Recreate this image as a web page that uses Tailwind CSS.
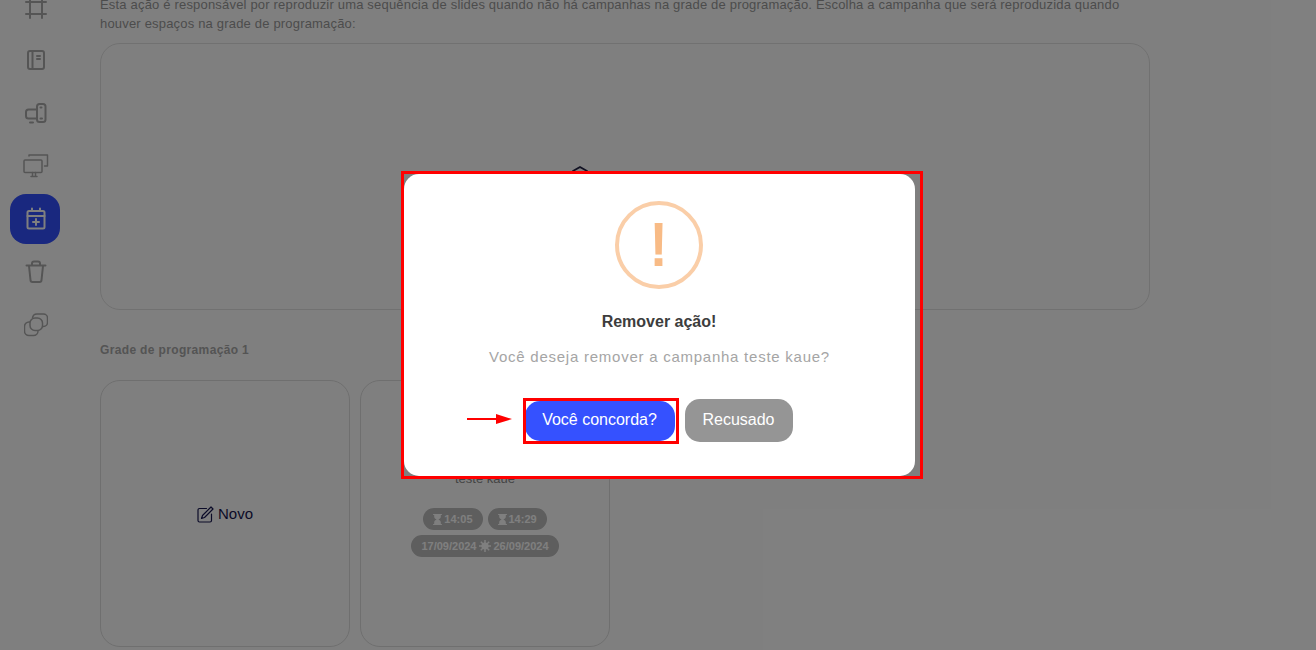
<!DOCTYPE html>
<html lang="pt-BR">
<head>
<meta charset="utf-8">
<title>Remover ação</title>
<script src="https://cdn.jsdelivr.net/npm/@tailwindcss/browser@4"></script>
</head>
<body class="h-[650px] w-[1316px] overflow-hidden bg-white font-['Liberation_Sans',Arial,sans-serif]">
<div class="relative h-[650px] w-[1316px] overflow-hidden">
  <div class="flex h-[650px] items-start">
    <aside class="flex w-[100px] shrink-0 flex-col items-start gap-[2.8px] pl-[10px] pt-0 mt-[-17px] text-[#aaaaaa]">
      <div class="flex h-[50px] w-[52px] items-center justify-center"><svg class="h-6 w-6" viewBox="0 0 24 24" fill="none" stroke="currentColor" stroke-width="2" stroke-linecap="round"><path d="M22 6H2M22 18H2M6 2v20M18 2v20"/></svg></div>
      <div class="flex h-[50px] w-[52px] items-center justify-center pb-[2px]"><svg class="h-6 w-6" viewBox="0 0 24 24" fill="none" stroke="currentColor" stroke-width="2" stroke-linecap="round" stroke-linejoin="round"><path d="M6 3h12a2 2 0 0 1 2 2v14a2 2 0 0 1-2 2H6a2 2 0 0 1-2-2V5a2 2 0 0 1 2-2zM8.500 3v18M13 8h3M13 11h3"/></svg></div>
      <div class="flex h-[50px] w-[52px] items-center justify-center"><svg class="h-6 w-6" viewBox="0 0 24 24" fill="none" stroke="currentColor" stroke-width="2" stroke-linecap="round" stroke-linejoin="round"><rect x="13" y="2" width="8.500" height="18" rx="2.500"/><path d="M16.500 16.500h1.500M16.500 5.500h1M13 7.500H4.500A2.500 2.500 0 0 0 2 10v4a2.500 2.500 0 0 0 2.500 2.500H13M6 20.500h3"/></svg></div>
      <div class="flex h-[50px] w-[52px] items-center justify-center"><svg class="h-[24px] w-[26px]" viewBox="0 0 26 24" fill="none" stroke="currentColor" stroke-width="1.500" stroke-linecap="round" stroke-linejoin="round"><rect x="1" y="6" width="18" height="12.500" rx="1"/><path d="M6 2V1h18.500v11h-3M8 22.500h6M9.500 18.500v4M12.500 18.500v4"/></svg></div>
      <div class="flex h-[50px] w-[50px] items-center justify-center rounded-[16px] bg-[#3250fe] text-white"><svg class="ml-[2px] h-6 w-6" viewBox="0 0 24 24" fill="none" stroke="currentColor" stroke-width="2" stroke-linecap="round" stroke-linejoin="round"><rect x="3.500" y="4" width="17" height="17.500" rx="1.500"/><path d="M3.500 9h17M8 1.500V4M16 1.500V4M12 12v6M9 15h6"/></svg></div>
      <div class="flex h-[50px] w-[52px] items-center justify-center"><svg class="h-6 w-6" viewBox="0 0 24 24" fill="none" stroke="currentColor" stroke-width="2" stroke-linecap="round" stroke-linejoin="round"><path d="M2.500 5.500h19M5 6l1.500 14a2 2 0 0 0 2 2h7a2 2 0 0 0 2-2L19 6M8 5V3.500A2 2 0 0 1 10 1.500h4a2 2 0 0 1 2 2V5"/></svg></div>
      <div class="flex h-[50px] w-[52px] items-center justify-center"><svg class="h-6 w-6" viewBox="0 0 24 24" fill="none" stroke="currentColor" stroke-width="1.500" stroke-linejoin="round"><rect x="6" y="5" width="12.500" height="12.500" rx="5"/><path d="M8.500 5A4.500 4.500 0 0 1 13 1h6.500a4 4 0 0 1 4 4v4.500a4 4 0 0 1-4 4H18.500M6 9H5a4.500 4.500 0 0 0-4.500 4.500V18A4.500 4.500 0 0 0 5 22.500h4.500A4.500 4.500 0 0 0 14 18v-.5"/></svg></div>
    </aside>
    <main class="w-[1050px] shrink-0 pt-0 mt-[-5px]">
      <p class="w-[1050px] text-[13px] leading-[19px] tracking-[0.185px] text-[#999999]">Esta ação é responsável por reproduzir uma sequência de slides quando não há campanhas na grade de programação. Escolha a campanha que será reproduzida quando houver espaços na grade de programação:</p>
      <div class="mt-[10px] flex h-[267px] justify-center rounded-[20px] border border-[#e2e2e2] pt-[120px]">
        <svg class="-ml-[90px] h-6 w-6 text-[#222244]" viewBox="0 0 24 24" fill="none" stroke="currentColor" stroke-width="1.800"><path d="M5 7l7-4 7 4v10l-7 4-7-4z"/></svg>
      </div>
      <h2 class="mt-[33px] text-[12px] leading-[14px] tracking-[0.35px] font-bold text-[#a8a8a8]">Grade de programação 1</h2>
      <div class="mt-[23px] flex gap-[10px]">
        <div class="flex h-[267px] w-[250px] items-center justify-center gap-1 rounded-[20px] border border-[#dedede] pt-[2px] text-[15px] text-[#161650]">
          <svg class="h-[17px] w-[17px]" viewBox="0 0 17 17" fill="none" stroke="currentColor" stroke-width="1.200" stroke-linejoin="round" stroke-linecap="round"><path d="M9.500 2.500H2.500A1.500 1.500 0 0 0 1 4v10.500A1.500 1.500 0 0 0 2.500 16h10.500a1.500 1.500 0 0 0 1.500-1.500V8"/><path d="M14 1l2 2-8.500 8.500-3 1 1-3z"/></svg>
          <span>Novo</span>
        </div>
        <div class="flex h-[267px] w-[250px] flex-col items-center rounded-[20px] border border-[#dedede] pt-[90px]">
          <span class="text-[13px] leading-[16px] text-[#888888]">teste kaue</span>
          <div class="mt-[21px] flex gap-[5px]">
            <span class="flex h-[22px] items-center gap-[2px] rounded-full bg-[#bcbcbc] px-[10px] text-[11px] font-bold text-white">
              <svg class="h-[11px] w-[9px]" viewBox="0 0 8 10" fill="currentColor"><path d="M0 0h8v1H7v1.500C7 3.800 5.800 4.500 4.800 5 5.800 5.500 7 6.200 7 7.500V9h1v1H0V9h1V7.500C1 6.200 2.200 5.500 3.200 5 2.200 4.500 1 3.800 1 2.500V1H0z"/></svg>14:05</span>
            <span class="flex h-[22px] items-center gap-[2px] rounded-full bg-[#bcbcbc] px-[10px] text-[11px] font-bold text-white">
              <svg class="h-[11px] w-[9px]" viewBox="0 0 8 10" fill="currentColor"><path d="M0 0h8v1H7v1.500C7 3.800 5.800 4.500 4.800 5 5.800 5.500 7 6.200 7 7.500V9h1v1H0V9h1V7.500C1 6.200 2.200 5.500 3.200 5 2.200 4.500 1 3.800 1 2.500V1H0z"/></svg>14:29</span>
          </div>
          <span class="mt-[5px] flex h-[22px] items-center gap-[2.500px] rounded-full bg-[#bcbcbc] px-[10px] text-[11px] font-bold text-white">17/09/2024
            <svg class="h-[12px] w-[12px]" viewBox="0 0 12 12" fill="currentColor"><circle cx="6" cy="6" r="3.600"/><path stroke="currentColor" stroke-width="1.500" d="M6 0v12M0 6h12M1.800 1.800l8.400 8.400M10.200 1.800l-8.400 8.400"/></svg>
            26/09/2024</span>
        </div>
      </div>
    </main>
  </div>

  <div class="absolute inset-0 bg-black/50"></div>

  <section class="absolute left-[404px] top-[174px] flex h-[302px] w-[511px] flex-col items-center rounded-[15px] bg-white">
    <div class="mt-[27px] -ml-[2px] flex h-[88px] w-[88px] items-center justify-center rounded-full border-4 border-[#facea8]">
      <span class="text-[60px] leading-[60px] text-[#f8bb86] [-webkit-text-stroke:2px_#f8bb86]">!</span>
    </div>
    <h1 class="mt-[23px] -ml-[1px] text-[16px] leading-[20px] font-bold text-[#3d3d3d]">Remover ação!</h1>
    <p class="mt-[16px] text-[15px] leading-[18px] tracking-[0.75px] text-[#a5a5a5]">Você deseja remover a campanha teste kaue?</p>
    <div class="mt-[33px] -ml-[2px] flex items-center gap-[10px]">
      <button class="h-[40px] w-[150px] rounded-[15px] bg-[#3551ff] pb-[2px] text-[16px] text-white">Você concorda?</button>
      <button class="h-[43px] w-[108px] rounded-[15px] bg-[#959595] pb-[2px] text-[16px] text-white">Recusado</button>
    </div>
  </section>

  <div class="absolute left-[401px] top-[171px] h-[308px] w-[522px] border-[3px] border-[#ff0000]"></div>
  <div class="absolute left-[523px] top-[398px] h-[46px] w-[156px] border-[3px] border-[#ff0000]"></div>
  <svg class="absolute left-[466px] top-[412px] h-[14px] w-[47px]" viewBox="0 0 47 14" fill="#ff0000"><path d="M1 6h29V2l16 5-16 5V8H1z"/></svg>
</div>
</body>
</html>
